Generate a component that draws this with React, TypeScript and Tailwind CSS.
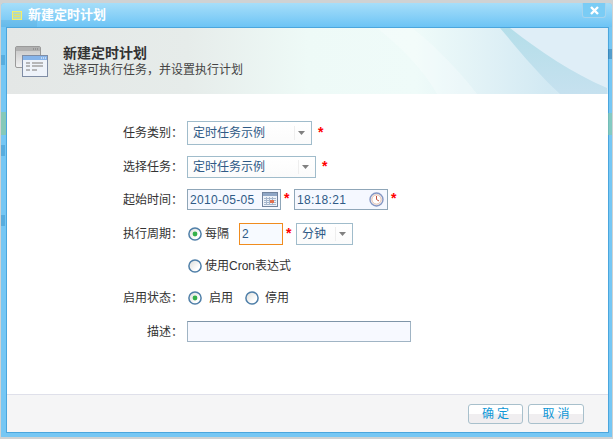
import React from 'react';

const cjk = { fontFamily: '"Liberation Sans", "Noto Sans CJK SC", sans-serif' };

function Label({ children }: { children: React.ReactNode }) {
  return <div className="w-[180px] shrink-0 text-right text-[12px] text-[#333] pr-[4px] whitespace-pre">{children}</div>;
}

function Star() {
  return <span className="text-[14px] font-bold leading-none text-[#f00] pb-[3px]">*</span>;
}

function Radio({ checked }: { checked?: boolean }) {
  return (
    <svg width="14" height="14" viewBox="0 0 14 14" className="shrink-0">
      <defs>
        <linearGradient id="radioFill" x1="0" y1="0" x2="1" y2="1">
          <stop offset="0" stopColor="#dcdcd8" />
          <stop offset="0.7" stopColor="#ffffff" />
        </linearGradient>
      </defs>
      <circle cx="7" cy="7" r="6.1" fill="url(#radioFill)" stroke="#4f7fa8" strokeWidth="1.5" />
      {checked && <circle cx="7" cy="7" r="2.4" fill="#35b04a" />}
    </svg>
  );
}

function Caret() {
  return (
    <span className="flex h-[14px] w-[14px] items-center justify-center border-l border-[#eeeeee]">
      <svg width="7" height="4" viewBox="0 0 7 4"><path d="M0 0h7L3.5 4z" fill="#808080" /></svg>
    </span>
  );
}

function Select({ width, height, text }: { width: string; height: string; text: string }) {
  return (
    <div className={`${width} ${height} flex items-center justify-between border border-[#a0bccb] bg-gradient-to-b from-white to-[#fbfbfb] pl-[5px] pr-[3px] text-[12px] text-[#2f5a86]`}>
      <span>{text}</span>
      <Caret />
    </div>
  );
}

function CalendarIcon() {
  return (
    <svg width="16" height="15" viewBox="0 0 16 15">
      <rect x="0.5" y="0.5" width="15" height="14" fill="#eef2f8" stroke="#71839e" />
      <rect x="1" y="1" width="14" height="3" fill="#8fa6c6" />
      <path d="M2 6.5h12M2 8.5h12M2 10.5h12M2 12.5h12M4.5 5v8M7.5 5v8M10.5 5v8" stroke="#a6b6cc" strokeWidth="1" />
      <rect x="8" y="8" width="4" height="3" fill="#e2704f" />
    </svg>
  );
}

function ClockIcon() {
  return (
    <svg width="15" height="15" viewBox="0 0 15 15">
      <circle cx="7.5" cy="7.5" r="6.5" fill="#f4f1ee" stroke="#8496c4" strokeWidth="1.4" />
      <circle cx="7.5" cy="7.5" r="4.6" fill="#fff" stroke="#e0b09c" strokeWidth="0.8" />
      <path d="M7.5 4v3.5l2.5 1.5" fill="none" stroke="#c2503c" strokeWidth="1" />
    </svg>
  );
}

function WindowsIcon() {
  return (
    <svg width="33" height="31" viewBox="0 0 33 31">
      <defs>
        <linearGradient id="back" x1="0" y1="0" x2="0" y2="1">
          <stop offset="0" stopColor="#c4c4c4" />
          <stop offset="1" stopColor="#f2f2f2" />
        </linearGradient>
      </defs>
      <rect x="0.5" y="0.5" width="25" height="21" rx="1.5" fill="url(#back)" stroke="#9a9a9a" />
      <rect x="1" y="1" width="24" height="4" fill="#b0b0b0" />
      <path d="M18 3h5" stroke="#777" strokeDasharray="1 1" />
      <rect x="7.5" y="9.5" width="25" height="21" fill="#eef3fa" stroke="#7f8da5" />
      <rect x="8" y="10" width="24" height="4" fill="#86b4ea" />
      <path d="M26 12h5" stroke="#fff" strokeDasharray="1 1" />
      <path d="M11 17h4M17 17h11M11 20h4M17 20h11M11 24h4M17 24h5" stroke="#a3a3a3" strokeWidth="1.6" />
    </svg>
  );
}

// page behind the window, showing through the translucent frame
function Ghost({ className }: { className: string }) {
  return <span className={`absolute ${className}`} />;
}

export default function App() {
  return (
    <div className="h-[439px] w-[613px] overflow-hidden bg-[#cfd2d3] pt-[3px] pl-px" style={cjk}>
      <div className="relative flex h-[434px] w-[611px] flex-col rounded-t-[4px] bg-[#76c7f4]">
        {/* title bar */}
        <div className="flex h-[24px] shrink-0 items-center rounded-t-[4px] bg-gradient-to-b from-[#a6def9] to-[#6cc4f5] pl-[11px]">
          <span className="mr-[6px] flex h-[9px] w-[10px] flex-col items-center justify-center gap-px border border-[#f2ef6c] bg-[#b4dcc0]">
            <span className="h-px w-[6px] bg-[#e6e268]" />
            <span className="h-px w-[6px] bg-[#e6e268]" />
          </span>
          <span className="text-[13px] font-bold text-white">新建定时计划</span>
        </div>
        <div className="absolute right-[6px] top-0 flex h-[15px] w-[24px] items-center justify-center rounded-b-[3px] border border-t-0 border-[#a6d4ee] bg-[#7accf5]">
          <svg width="9" height="9" viewBox="0 0 9 9"><path d="M1 1l7 7M8 1l-7 7" stroke="#fff" strokeWidth="2.4" /></svg>
        </div>

        {/* frame show-through */}
        <Ghost className="left-0 top-[17px] h-[7px] w-[36px] bg-[#4f9fd0]/25" />
        <Ghost className="left-0 top-[52px] h-[10px] w-[4px] bg-[#2f86bd]/40" />
        <Ghost className="left-0 top-[142px] h-[11px] w-[4px] bg-[#2f86bd]/40" />
        <Ghost className="left-0 top-[212px] h-[11px] w-[4px] bg-[#2f86bd]/40" />
        <Ghost className="left-0 top-[109px] h-[23px] w-[5px] bg-[#8ccba0]/70" />
        <Ghost className="right-0 top-[110px] h-[22px] w-[4px] bg-[#8ccba0]/60" />
        <Ghost className="right-0 top-[46px] h-[10px] w-[4px] bg-[#1f5f90]/40" />

        {/* dialog body */}
        <div className="ml-[5px] mr-[3px] flex h-[406px] flex-col border border-[#4ba6dd] bg-white">
          <div className="relative flex h-[66px] shrink-0 items-center overflow-hidden bg-[linear-gradient(90deg,#e4e7e6_0%,#e6ecea_30%,#eefaf7_50%,#effbf9_68%,#e0f1f6_80%,#d2e9f3_90%,#d8ecf6_100%)] pl-[8px]">
            <svg className="absolute inset-0" width="600" height="66" viewBox="0 0 600 66">
              <defs>
                <linearGradient id="band" x1="0" y1="0" x2="0" y2="1">
                  <stop offset="0" stopColor="#b4dee9" />
                  <stop offset="1" stopColor="#c6e1ef" />
                </linearGradient>
              </defs>
              <path d="M503 0H600V60C565 45 535 25 503 0z" fill="#dfeef7" />
              <path d="M493 0H503C535 25 565 45 600 60V66H553C530 45 510 20 493 0z" fill="url(#band)" />
              <path d="M370 0C395 20 415 40 430 66H470C450 40 425 15 405 0z" fill="#ffffff" opacity="0.25" />
            </svg>
            <div className="relative flex items-center">
              <WindowsIcon />
              <div className="ml-[15px] flex flex-col">
                <span className="text-[14px] font-bold leading-[17px] text-[#333]">新建定时计划</span>
                <span className="text-[12px] leading-[16px] text-[#444]">选择可执行任务，并设置执行计划</span>
              </div>
            </div>
          </div>

          {/* form */}
          <div className="flex flex-1 flex-col pt-[27px]">
            <div className="flex h-[24px] items-center">
              <Label>任务类别：</Label>
              <Select width="w-[125px]" height="h-[24px]" text="定时任务示例" />
              <span className="ml-[6px] flex"><Star /></span>
            </div>
            <div className="mt-[11px] flex h-[22px] items-center">
              <Label>选择任务：</Label>
              <Select width="w-[129px]" height="h-[22px]" text="定时任务示例" />
              <span className="ml-[6px] flex"><Star /></span>
            </div>
            <div className="mt-[11px] flex h-[21px] items-center">
              <Label>起始时间：</Label>
              <div className="flex h-[21px] w-[94px] items-center justify-between border border-[#8fa6b8] bg-[#f5f8ff] pl-[2px] pr-[2px] text-[12px] tracking-[0.3px] text-[#2f5a86]">
                <span>2010-05-05</span>
                <CalendarIcon />
              </div>
              <span className="ml-[3px] flex w-[10px]"><Star /></span>
              <div className="flex h-[21px] w-[94px] items-center justify-between border border-[#8fa6b8] bg-[#f5f8ff] pl-[2px] pr-[3px] text-[12px] tracking-[0.3px] text-[#2f5a86]">
                <span>18:18:21</span>
                <ClockIcon />
              </div>
              <span className="ml-[3px] flex"><Star /></span>
            </div>
            <div className="mt-[13px] flex h-[22px] items-center">
              <Label>执行周期：</Label>
              <span className="ml-[1px]"><Radio checked /></span>
              <span className="ml-[3px] text-[12px] text-[#333]">每隔</span>
              <div className="ml-[10px] flex h-[22px] w-[44px] items-center border border-[#f08c1e] bg-[#f7faff] pl-[2px] text-[12px] text-[#2f5a86]">2</div>
              <span className="ml-[3px] flex w-[10px]"><Star /></span>
              <Select width="w-[57px]" height="h-[22px]" text="分钟" />
            </div>
            <div className="mt-[10px] flex h-[22px] items-center">
              <Label>{' '}</Label>
              <span className="ml-[1px]"><Radio /></span>
              <span className="ml-[3px] text-[12px] text-[#333]">使用Cron表达式</span>
            </div>
            <div className="mt-[10px] flex h-[22px] items-center">
              <Label>启用状态：</Label>
              <span className="ml-[1px]"><Radio checked /></span>
              <span className="ml-[7px] text-[12px] text-[#333]">启用</span>
              <span className="ml-[12px]"><Radio /></span>
              <span className="ml-[6px] text-[12px] text-[#333]">停用</span>
            </div>
            <div className="mt-[12px] flex h-[21px] items-center">
              <Label>描述：</Label>
              <div className="h-[21px] w-[224px] border border-[#a0b4c4] border-t-[#7f95a8] bg-[#f7f9ff]" />
            </div>
          </div>

          {/* footer */}
          <div className="flex h-[38px] shrink-0 items-center justify-end gap-[5px] border-t border-[#dfe0ea] bg-[#f5f5f6] pr-[24px] pt-[1px]">
            <button className="h-[20px] w-[55px] rounded-[3px] border border-[#a8c0cc] bg-gradient-to-b from-white from-50% to-[#f0eef0] to-50% pl-[3px] text-[12px] tracking-[3px] text-[#0f97d6]">确定</button>
            <button className="h-[20px] w-[56px] rounded-[3px] border border-[#a8c0cc] bg-gradient-to-b from-white from-50% to-[#f0eef0] to-50% pl-[3px] text-[12px] tracking-[3px] text-[#0f97d6]">取消</button>
          </div>
        </div>
      </div>
    </div>
  );
}
